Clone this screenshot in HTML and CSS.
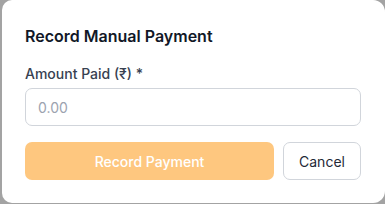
FILE: index.html
```html
<!DOCTYPE html>
<html>
<head>
<meta charset="utf-8">
<link rel="stylesheet" href="styles.css">
</head>
<body>
<div class="backdrop">
  <div class="modal">
    <h2 class="title">Record Manual Payment</h2>
    <label class="label" for="amt">Amount Paid (₹) *</label>
    <input id="amt" class="input" type="text" placeholder="0.00">
    <div class="actions">
      <button class="btn btn-primary">Record Payment</button>
      <button class="btn btn-secondary">Cancel</button>
    </div>
  </div>
</div>
</body>
</html>
```

FILE: styles.css
```css
* { box-sizing: border-box; }
html, body { margin: 0; padding: 0; }
body {
  font-family: Inter, "Noto Sans", sans-serif;
  background: #a3a3a3;
  width: 385px;
  height: 204px;
  overflow: hidden;
}
.backdrop {
  padding: 0 0 1px 2px;
  height: 204px;
}
.modal {
  background: #ffffff;
  border-radius: 10px 12px 12px 10px;
  height: 203px;
  padding: 24px 24px 23px 23px;
  display: flex;
  flex-direction: column;
}
.title {
  margin: 0;
  font-size: 16px;
  line-height: 24px;
  font-weight: 600;
  color: #111827;
}
.label {
  margin-top: 16px;
  font-size: 14px;
  line-height: 20px;
  font-weight: 500;
  color: #374151;
}
.input {
  margin-top: 4px;
  height: 38px;
  width: 100%;
  border: 1px solid #d1d5db;
  border-radius: 7px;
  padding: 0 12px;
  font-family: inherit;
  font-size: 14px;
  color: #111827;
  outline: none;
}
.input::placeholder { color: #9ca3af; }
.actions {
  margin-top: 16px;
  display: flex;
  gap: 9px;
}
.btn {
  height: 38px;
  border-radius: 7px;
  font-family: inherit;
  font-size: 14px;
  font-weight: 500;
  cursor: pointer;
}
.btn-primary {
  flex: 1;
  background: #fec77f;
  border: none;
  color: #ffffff;
}
.btn-secondary {
  width: 78px;
  background: #ffffff;
  border: 1px solid #d1d5db;
  color: #1f2937;
  font-weight: 400;
}
```
